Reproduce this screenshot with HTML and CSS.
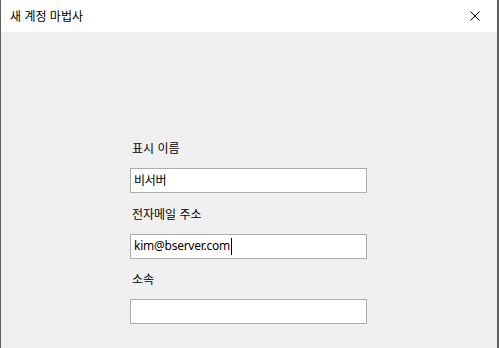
FILE: index.html
```html
<!DOCTYPE html>
<html lang="ko">
<head>
    <meta charset="UTF-8">
    <title>새 계정 마법사</title>
    <link rel="stylesheet" href="styles.css">
</head>
<body>
    <div class="window">
        <div class="title-bar">
            <span class="title">새 계정 마법사</span>
            <button class="close-btn" aria-label="닫기">
                <svg width="10" height="10" viewBox="0 0 10 10">
                    <path d="M0.5 0.5 L9.5 9.5 M9.5 0.5 L0.5 9.5" stroke="#000" stroke-width="1" fill="none"/>
                </svg>
            </button>
        </div>
        <div class="content">
            <div class="form">
                <div class="form-group">
                    <div class="label">표시 이름</div>
                    <div class="field">비서버</div>
                </div>
                <div class="form-group">
                    <div class="label">전자메일 주소</div>
                    <div class="field">kim@bserver.com<span class="caret"></span></div>
                </div>
                <div class="form-group">
                    <div class="label">소속</div>
                    <div class="field"></div>
                </div>
            </div>
        </div>
    </div>
</body>
</html>
```

FILE: styles.css
```css
* {
    margin: 0;
    padding: 0;
    box-sizing: border-box;
}

html, body {
    width: 499px;
    height: 348px;
    overflow: hidden;
}

body {
    font-family: 'Noto Sans CJK KR', 'Noto Sans', sans-serif;
    font-size: 12px;
    color: #000;
    background: #f0f0f0;
}

.window {
    height: 348px;
    display: flex;
    flex-direction: column;
    border-left: 1px solid #5f5f5f;
    border-right: 2px solid #5f5f5f;
}

.title-bar {
    height: 32px;
    background: #fff;
    display: flex;
    align-items: center;
    justify-content: space-between;
    padding-left: 9px;
}

.title {
    line-height: 16px;
    margin-top: -1px;
}

.close-btn {
    width: 46px;
    height: 32px;
    border: none;
    background: transparent;
    display: flex;
    align-items: center;
    justify-content: center;
    margin-right: -1px;
}

.content {
    flex: 1;
    background: #f0f0f0;
    padding-top: 108px;
    padding-left: 129px;
}

.form {
    width: 237px;
    display: flex;
    flex-direction: column;
    gap: 12px;
}

.form-group {
    display: flex;
    flex-direction: column;
    gap: 12px;
}

.form-group + .form-group .label {
    margin-top: 0.5px;
}

.label {
    line-height: 16px;
    padding-left: 2px;
}

.field {
    height: 25px;
    background: #fff;
    border: 1px solid #adadad;
    padding: 0 3px;
    line-height: 22px;
    font-size: 12px;
    letter-spacing: -0.25px;
    display: flex;
    align-items: center;
    font-family: 'Noto Sans', 'Noto Sans CJK KR', sans-serif;
}

.caret {
    display: inline-block;
    width: 1px;
    height: 17px;
    background: #000;
    margin-left: 1px;
}
```
